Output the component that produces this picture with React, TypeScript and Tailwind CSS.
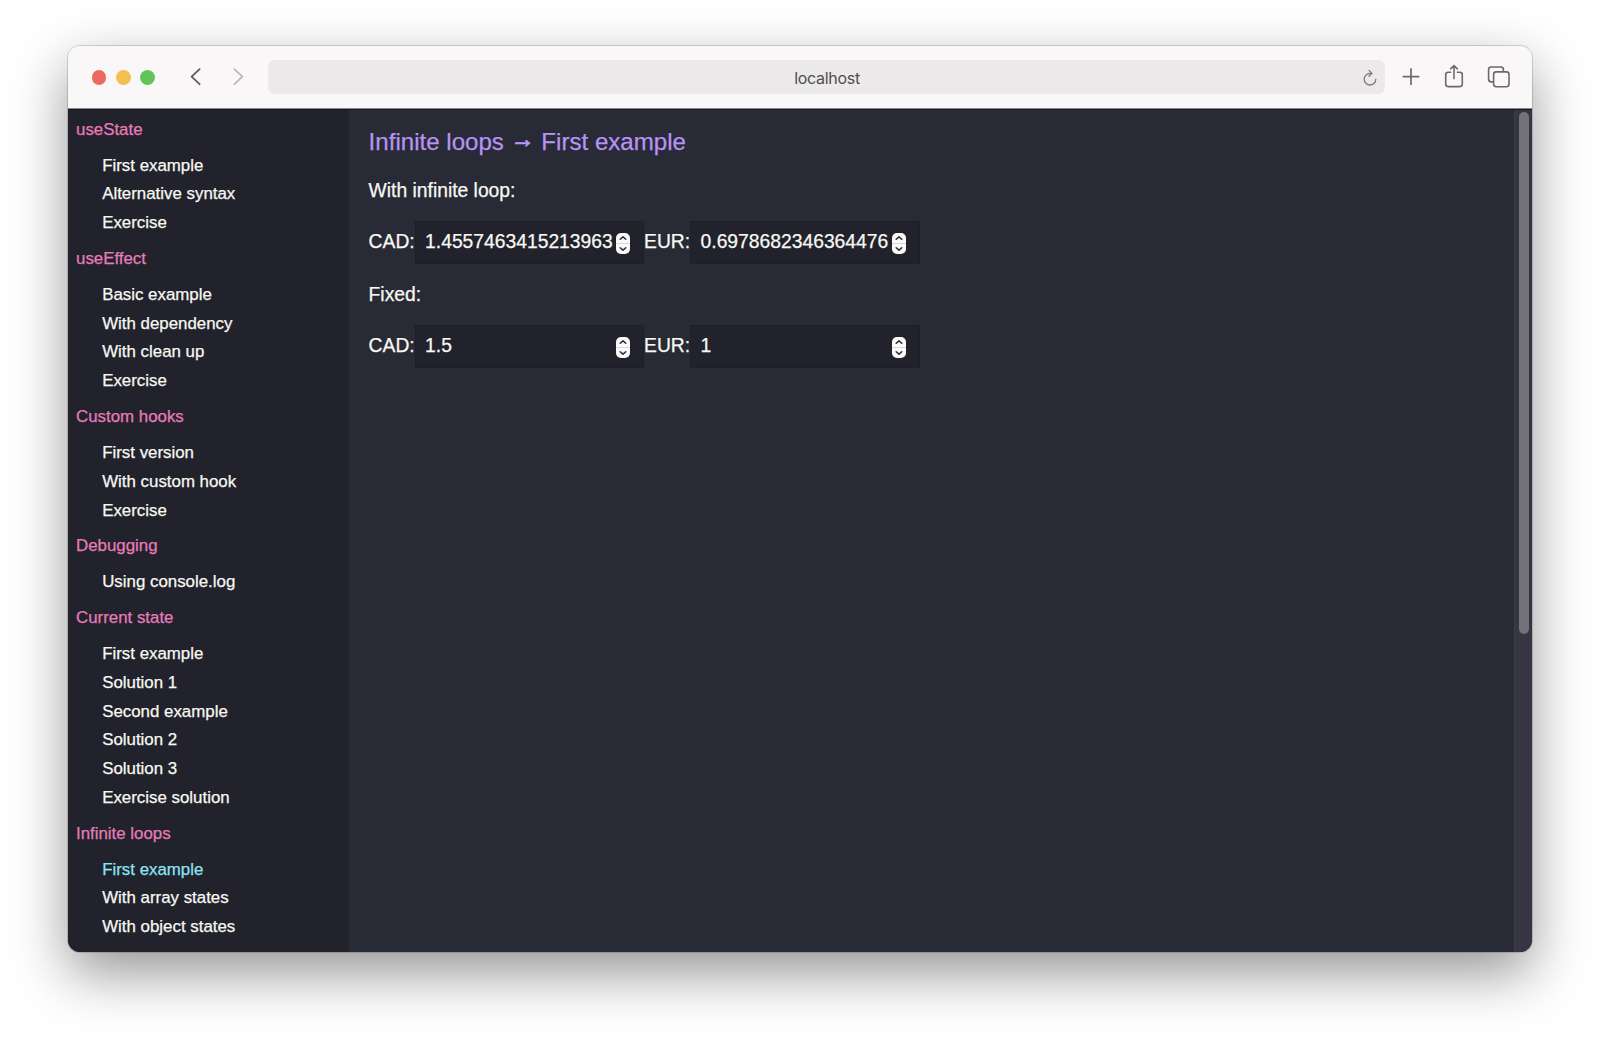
type Section = { title: string; items: string[] };

const sections: Section[] = [
  { title: "useState", items: ["First example", "Alternative syntax", "Exercise"] },
  { title: "useEffect", items: ["Basic example", "With dependency", "With clean up", "Exercise"] },
  { title: "Custom hooks", items: ["First version", "With custom hook", "Exercise"] },
  { title: "Debugging", items: ["Using console.log"] },
  {
    title: "Current state",
    items: ["First example", "Solution 1", "Second example", "Solution 2", "Solution 3", "Exercise solution"],
  },
  { title: "Infinite loops", items: ["First example", "With array states", "With object states"] },
];

const active = { section: "Infinite loops", item: "First example" };

function Toolbar() {
  return (
    <header className="flex h-[63px] shrink-0 items-center border-b border-[#8b8a8d] bg-[#f9f7f8] pl-[23.7px] text-[#6b696a]">
      <div className="mt-[1px] flex gap-[9.5px]">
        <span className="size-[14.7px] rounded-full bg-[#ed6a5f]" />
        <span className="size-[14.7px] rounded-full bg-[#f4bf50]" />
        <span className="size-[14.7px] rounded-full bg-[#61c555]" />
      </div>
      <svg className="ml-[31.3px] h-6 w-[20px]" viewBox="0 0 20 24" fill="none" stroke="#5c5a5b" strokeWidth="1.8" strokeLinecap="round" strokeLinejoin="round">
        <path d="M13.6 4.2 5.6 11.7l8 7.5" />
      </svg>
      <svg className="ml-[22px] h-6 w-[20px]" viewBox="0 0 20 24" fill="none" stroke="#bab8b9" strokeWidth="1.8" strokeLinecap="round" strokeLinejoin="round">
        <path d="M6.4 4.2l8 7.5-8 7.5" />
      </svg>
      <div className="ml-[20px] flex h-[34px] w-[1117px] items-center rounded-[7px] bg-[#ebe9ea]">
        <span className="flex-1 pt-[2px] pl-[25px] text-center font-['Inter',sans-serif] text-[16px] tracking-[-0.3px] text-[#504e4f]">localhost</span>
        <svg className="mt-[2px] mr-[6px] h-5 w-[18px]" viewBox="0 0 18 20" fill="none" stroke="#7c7a7b" strokeWidth="1.3" strokeLinecap="round" strokeLinejoin="round">
          <path d="M14.8 11.2a5.8 5.8 0 1 1-5.8-5.8h1.6" />
          <path d="M8 2.4l2.9 3-2.9 2.9" />
        </svg>
      </div>
      <svg className="ml-[15.6px] size-5" viewBox="0 0 20 20" fill="none" stroke="currentColor" strokeWidth="1.7" strokeLinecap="round">
        <path d="M10 1.9v15.4M2.3 9.6h15.4" />
      </svg>
      <svg className="ml-[23px] h-7 w-5" viewBox="0 0 20 28" fill="none" stroke="currentColor" strokeWidth="1.6" strokeLinecap="round" strokeLinejoin="round">
        <path d="M6.6 9.2H4.2a2.5 2.5 0 0 0-2.5 2.5v9.4a2.5 2.5 0 0 0 2.5 2.5h11.6a2.5 2.5 0 0 0 2.5-2.5v-9.4a2.5 2.5 0 0 0-2.5-2.5h-2.4" />
        <path d="M10 15.6V2.6M6.6 5.8 10 2.6l3.4 3.2" />
      </svg>
      <svg className="ml-[23px] size-6" viewBox="0 0 24 24" fill="none" stroke="currentColor" strokeWidth="1.6" strokeLinejoin="round">
        <rect x="6.6" y="6.9" width="15.4" height="14.8" rx="2.6" />
        <path d="M6.6 16.9H4.2a2.6 2.6 0 0 1-2.6-2.6V4.6A2.6 2.6 0 0 1 4.2 2h9.6a2.6 2.6 0 0 1 2.6 2.6v2.3" />
      </svg>
    </header>
  );
}

function Sidebar() {
  return (
    <nav className="w-[282px] shrink-0 overflow-hidden border-r border-[#2a2a35] bg-[#21222c] pt-[5.8px] pl-2 text-[16.88px] leading-[28.75px]">
      {sections.map((section) => (
        <div key={section.title} className="mb-[7.15px]">
          <h2 className="mb-[7.15px] text-[#e67cba]">{section.title}</h2>
          <ul className="pl-[26.2px]">
            {section.items.map((item) => (
              <li
                key={item}
                className={
                  section.title === active.section && item === active.item ? "text-[#8be3f5]" : "text-[#f8f8f2]"
                }
              >
                {item}
              </li>
            ))}
          </ul>
        </div>
      ))}
    </nav>
  );
}

function NumberField({ label, value }: { label: string; value: string }) {
  return (
    <label className="flex items-center">
      <span className="w-[46.1px] whitespace-nowrap">{label}:</span>
      <span className="flex h-[43px] w-[229.4px] items-center border border-[#1d1e27] bg-[#21222c] pl-[9.4px]">
        <span className="w-[191.4px]">{value}</span>
        <svg className="mt-[2px] h-[21px] w-[14px] shrink-0" viewBox="0 0 14 21" fill="none">
          <rect width="14" height="21" rx="5" fill="#fafafa" />
          <path d="M0 10.5h14" stroke="#cfcfcf" strokeWidth="0.8" />
          <path d="M4.2 6.3 7 3.9l2.8 2.4M4.2 14.7 7 17.1l2.8-2.4" stroke="#2b2b2b" strokeWidth="1.5" strokeLinecap="round" strokeLinejoin="round" />
        </svg>
      </span>
    </label>
  );
}

function Converter({ title, cad, eur }: { title: string; cad: string; eur: string }) {
  return (
    <section>
      <p className="leading-[29px]">{title}</p>
      <div className="mt-[16px] mb-[16px] flex">
        <NumberField label="CAD" value={cad} />
        <NumberField label="EUR" value={eur} />
      </div>
    </section>
  );
}

export default function App() {
  return (
    <div className="h-[1042px] w-[1600px] overflow-hidden bg-white px-[68px] pt-[46px] font-['Liberation_Sans',Arial,sans-serif]">
      <div className="flex h-[906px] flex-col overflow-hidden rounded-[12px] shadow-[0_0_0_1px_rgba(0,0,0,0.15),0_21px_56px_rgba(0,0,0,0.42)]">
        <Toolbar />
        <div className="flex min-h-0 flex-1 border-t border-[#15161d] bg-[#282a36] [-webkit-text-stroke:0.25px]">
          <Sidebar />
          <main className="flex-1 pt-[14px] pl-[18.6px] text-[19.3px] text-[#f8f8f2]">
            <h1 className="mb-[16px] text-[24.1px] leading-[36px] text-[#b793f3]">
              Infinite loops <span className="relative -top-[3px] [-webkit-text-stroke:0.9px]">→</span> First example
            </h1>
            <Converter title="With infinite loop:" cad="1.4557463415213963" eur="0.6978682346364476" />
            <Converter title="Fixed:" cad="1.5" eur="1" />
          </main>
          <div className="w-[18px] border-l border-[#3c3f4a] bg-[#353642] pt-[2px] pl-[4px]">
            <div className="h-[522px] w-[10px] rounded-full bg-[#727379]" />
          </div>
        </div>
      </div>
    </div>
  );
}
